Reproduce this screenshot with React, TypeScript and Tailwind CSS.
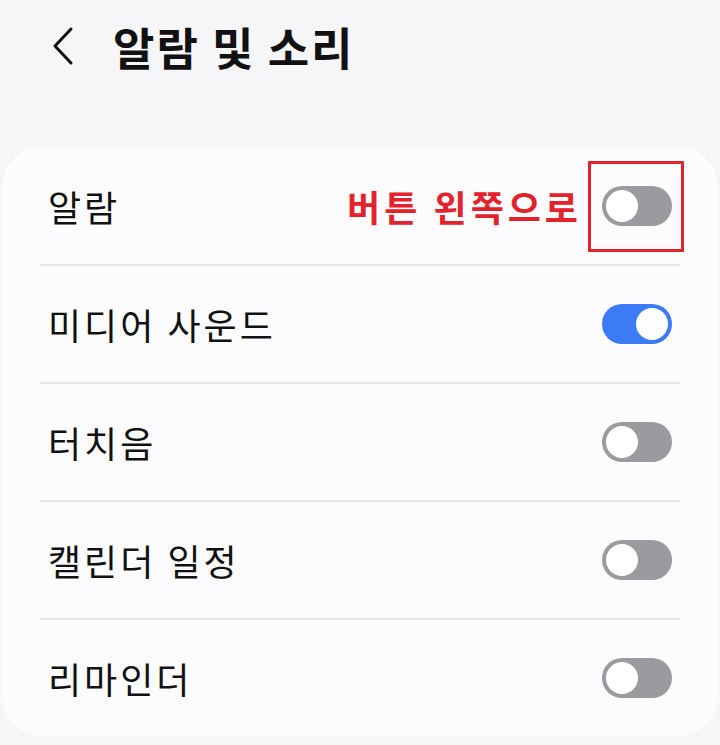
import React from "react";

const font = { fontFamily: '"Noto Sans CJK KR", "Noto Sans", sans-serif' };

function Toggle({ on }: { on: boolean }) {
  return on ? (
    <div className="w-[70px] h-[40px] rounded-full bg-[#3d7bf6] flex items-center justify-end pr-[4px]">
      <div className="w-[32px] h-[32px] rounded-full bg-white" />
    </div>
  ) : (
    <div className="w-[70px] h-[40px] rounded-full bg-[#9b9a9f] flex items-center justify-start pl-[4px]">
      <div className="w-[32px] h-[32px] rounded-full bg-white" />
    </div>
  );
}

const rows = [
  { label: "알람", on: false, note: true },
  { label: "미디어 사운드", on: true },
  { label: "터치음", on: false },
  { label: "캘린더 일정", on: false },
  { label: "리마인더", on: false },
];

export default function App() {
  return (
    <div className="w-[720px] h-[745px] bg-[#f6f6f8] flex flex-col overflow-hidden" style={font}>
      <div className="h-[92px] flex items-center pl-[50px]">
        <svg width="26" height="40" viewBox="0 0 26 40" className="mr-[37px]">
          <path d="M21 3 L5 20 L21 37" fill="none" stroke="#111" strokeWidth="3" strokeLinecap="round" strokeLinejoin="round" />
        </svg>
        <span className="text-[45px] font-bold text-[#111] leading-none tracking-[2px]">알람 및 소리</span>
      </div>
      <div className="h-[55px]" />
      <div className="mx-[2px] bg-[#fcfcfe] rounded-[40px] flex flex-col pt-[1px]">
        {rows.map((r, i) => (
          <div key={r.label} className="flex flex-col">
            <div className="h-[116px] flex items-center pl-[46px] pr-[46px]">
              <span className="text-[36px] text-[#111] leading-none flex-1 tracking-[3px]">{r.label}</span>
              {r.note ? (
                <div className="flex items-center">
                  <span className="text-[36px] font-bold text-[#e3232b] leading-none mr-[6px] tracking-[4px]">버튼 왼쪽으로</span>
                  <div className="w-[96px] h-[91px] border-[3px] border-[#e3232b] flex items-center justify-center mr-[-12px] pl-[2px]">
                    <Toggle on={r.on} />
                  </div>
                </div>
              ) : (
                <Toggle on={r.on} />
              )}
            </div>
            {i < rows.length - 1 && <div className="mx-[38px] h-[2px] bg-[#e4e4e6]" />}
          </div>
        ))}
      </div>
    </div>
  );
}
